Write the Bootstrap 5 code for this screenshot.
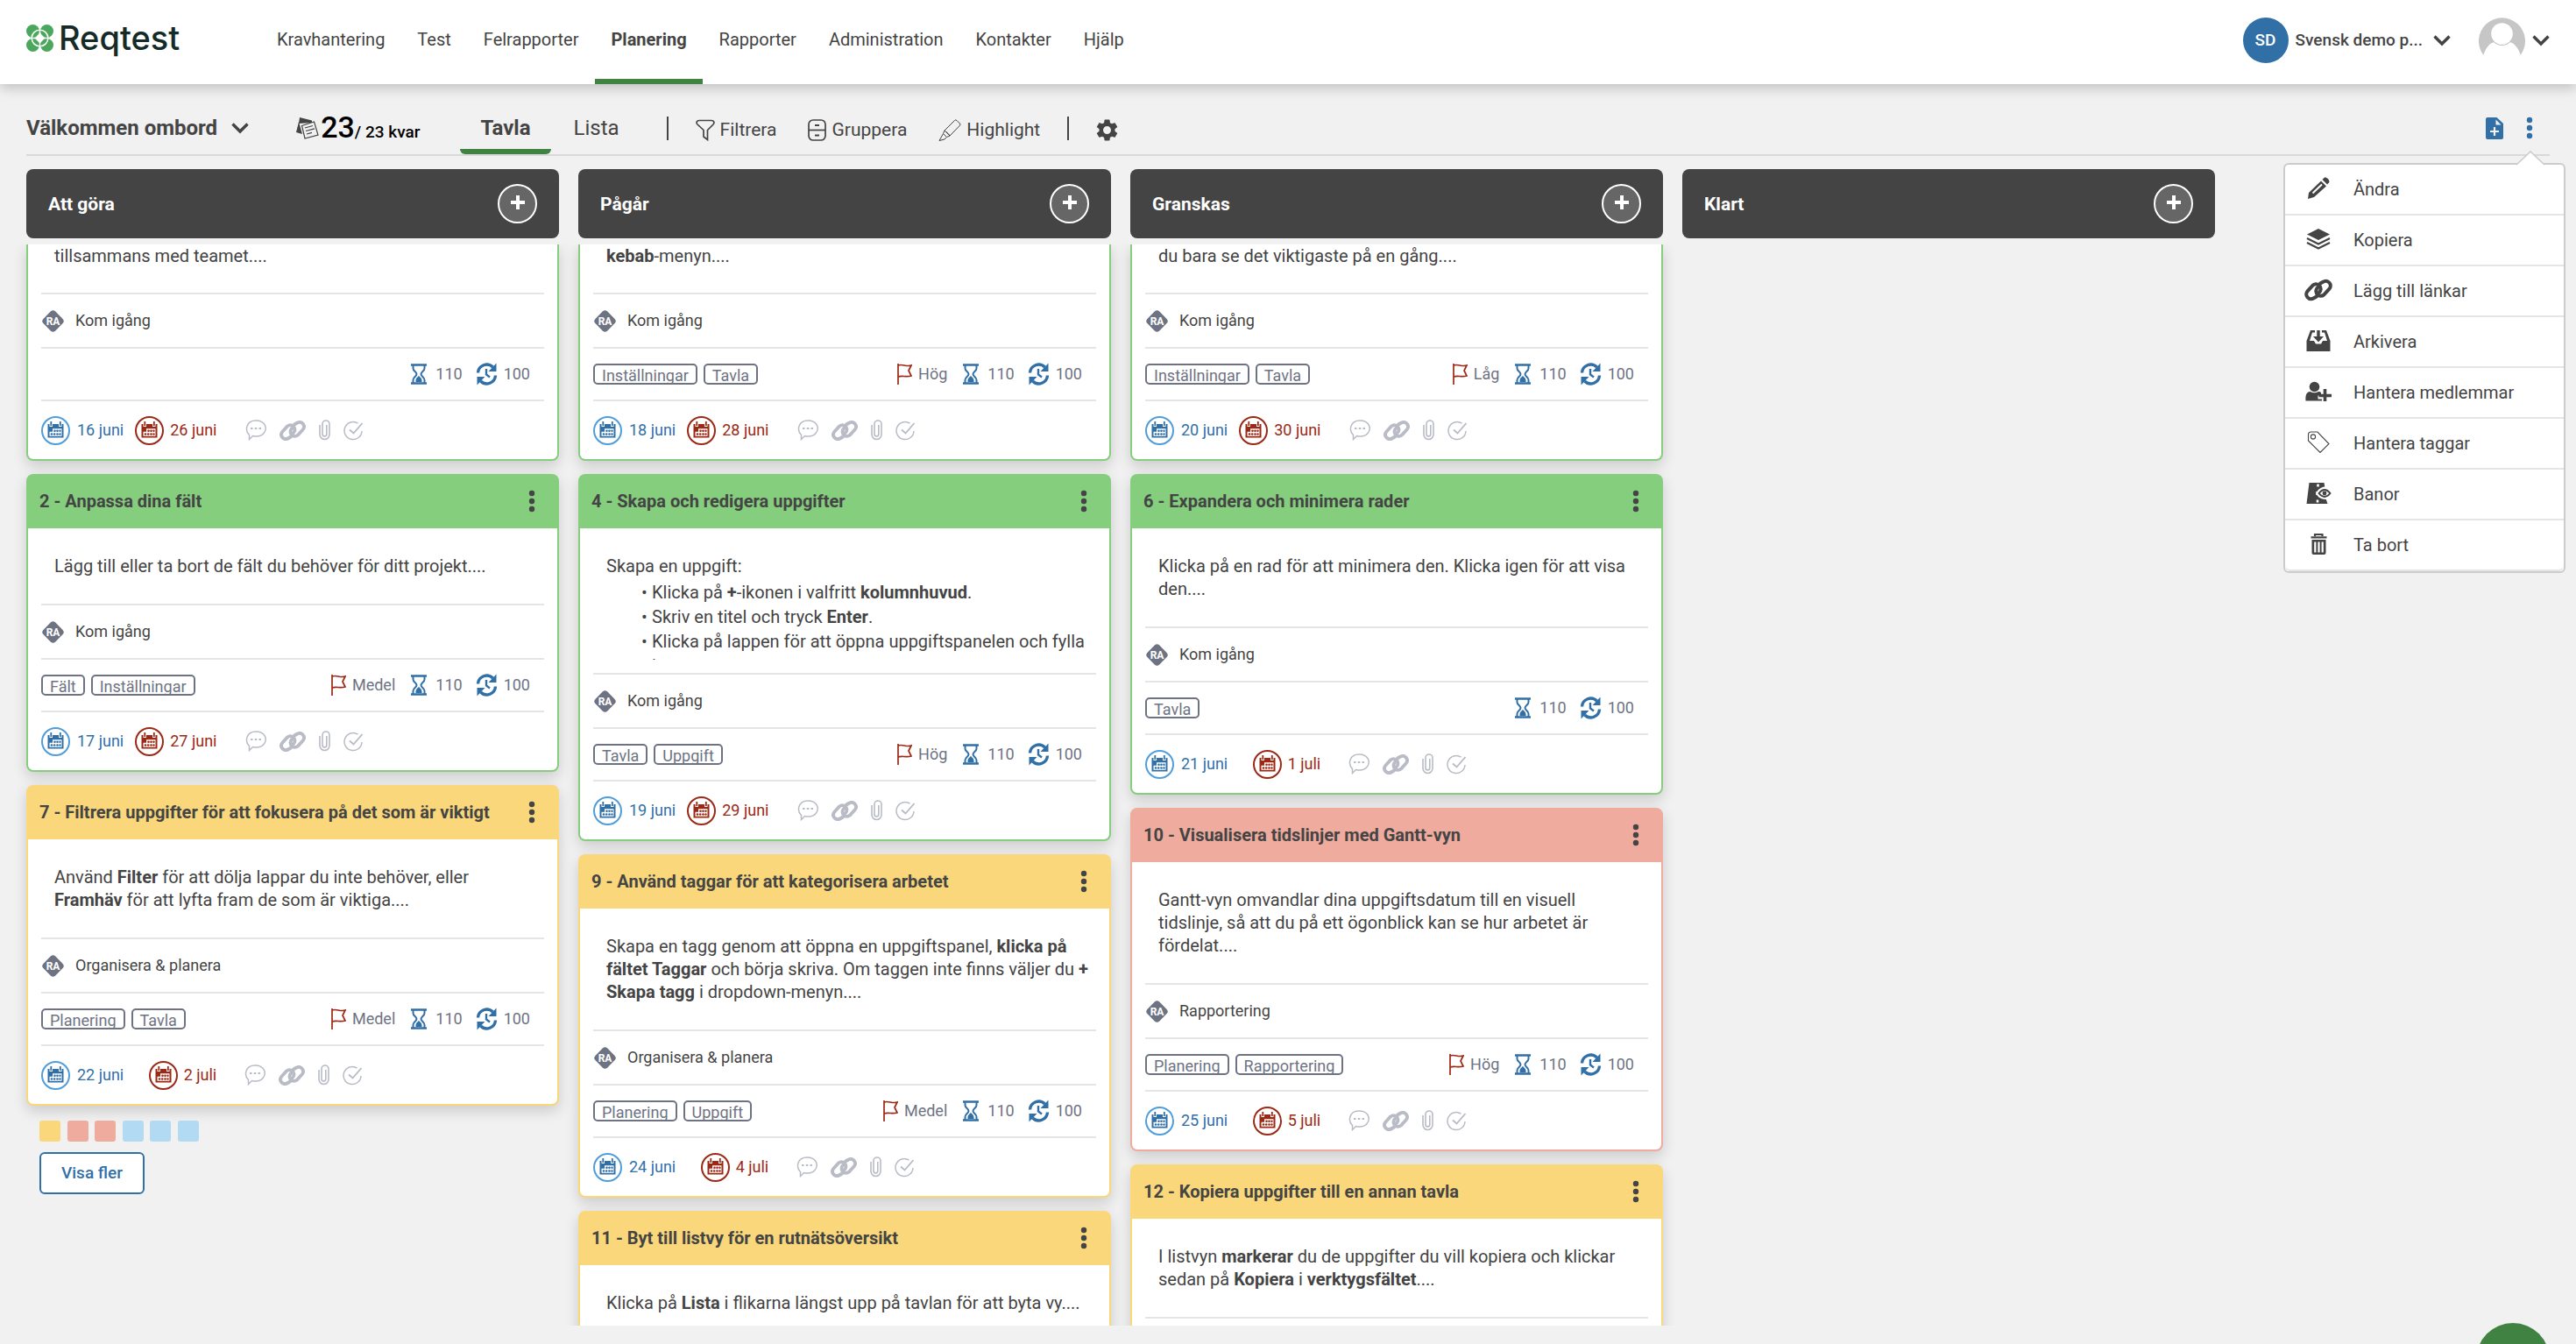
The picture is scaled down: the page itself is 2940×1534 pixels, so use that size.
<!DOCTYPE html>
<html lang="sv">
<head>
<meta charset="utf-8">
<meta name="viewport" content="width=device-width, initial-scale=1">
<title>Reqtest – Planering</title>
<link href="https://cdn.jsdelivr.net/npm/bootstrap@5.3.0/dist/css/bootstrap.min.css" rel="stylesheet">
<style>
  body { font: 400 20px/26px Roboto, "Liberation Sans", sans-serif; color: #444; background: #f1f1f1; height: 100vh; overflow: hidden; }
  svg { display: block; flex: none; }
  .btn { --bs-btn-font-size: inherit; --bs-btn-line-height: 26px; --bs-btn-color: #444; --bs-btn-border-width: 0; }
  .medium { font-weight: 500; }

  /* Top bar */
  .topbar { height: 96px; padding: 0 30px; background: #fff; box-shadow: 0 4px 14px rgba(0,0,0,.22); z-index: 2; }
  .brand { color: #152b28; font: 500 38px/46px Inter, Roboto, sans-serif; text-decoration: none; gap: 6px; width: 268px; margin-bottom: 10px; }
  .mainnav { gap: 1px; }
  .mainnav .nav-link { color: #444; padding: 32px 18px 38px; }
  .mainnav .nav-link.active { font-weight: 700; box-shadow: inset 0 -6px #3f8241; }
  .account { font-size: 19px; margin-bottom: 4px; }
  .initials { width: 52px; height: 52px; background: #3170a7; color: #fff; font-weight: 500; }

  /* Board toolbar */
  .toolbar { margin: 0 30px; height: 82px; padding-top: 20px; border-bottom: 2px solid #d9d9d9; }
  .board-name { font-size: 24px; font-weight: 700; gap: 16px; }
  .count { color: #000; font-size: 19px; font-weight: 500; gap: 2px; margin: 0 46px 0 54px; }
  .count-big { font-size: 34px; line-height: 34px; }
  .view-tabs { gap: 3px; }
  .view-tab { font-size: 24px; padding: 0 23px; border-radius: 0; }
  .view-tab.current { font-weight: 700; position: relative; }
  .view-tab.current::after { content: ""; position: absolute; left: 0; right: 0; bottom: 0; height: 6px; background: #3f8241; border-radius: 0 0 6px 6px; }
  .tools { gap: 36px; font-size: 21px; padding-top: 4px; }
  .tool { gap: 6px; }
  .divider-v { width: 2px; height: 27px; background: #444; margin: 0 31px; }
  .board-actions { gap: 26px; margin-right: 19px; }

  /* Lanes */
  .lanes { display: flex; gap: 22px; padding: 0 30px; }
  .lane { flex: 0 0 608px; }
  .lane-heads { margin-top: 15px; }
  .lane-head { height: 79px; background: #444; color: #fff; border-radius: 8px; padding: 0 25px; font-size: 21px; font-weight: 700; }
  .add-btn.btn { width: 45px; height: 45px; border: 2px solid #fff; background: #666; color: #fff; padding: 0 0 4px; }
  .lane-scroll { overflow: hidden; margin: 7px 0 21px; flex: 1 1 0; min-height: 0; }

  /* Tasks */
  .task { --tone: #85ce7e; border: 2px solid var(--tone); border-radius: 8px; background: #fff; box-shadow: 0 6px 16px rgba(0,0,0,.16); margin-bottom: 15px; }
  .task-yellow { --tone: #f9d77a; }
  .task-red { --tone: #efab9d; }
  .task-head { height: 60px; background: var(--tone); padding: 0 13px 2px; font-weight: 700; display: flex; align-items: center; justify-content: space-between; }
  .dots-btn.btn { padding: 0 12px; }
  .task-text { padding: 30px 22px 30px 30px; }
  .task-text.list-text { height: 165px; padding-bottom: 0; }
  .list-text > div { height: 120px; overflow: hidden; }
  .list-text ul { list-style: none; margin: 3px 0 0; padding-left: 52px; line-height: 28px; }
  .list-text li::before { content: "•"; margin-left: -12px; display: inline-block; width: 12px; }
  .task-cont { border-top: 0; border-radius: 0 0 8px 8px; }
  .task-cont .task-text { padding-top: 0; padding-bottom: 29px; }
  .task-row { margin: 0 15px; border-top: 2px solid #e5e5e5; display: flex; align-items: center; font-size: 18px; }
  .row-area { height: 62px; gap: 12px; }
  .row-tags { height: 60px; gap: 7px; padding-right: 16px; color: #6e7383; }
  .row-dates { height: 68px; }
  .tag-chip { height: 24px; border: 2px solid #6e7383; border-radius: 5px; color: #6e7383; line-height: 20px; padding: 2px 8px 0; overflow: hidden; text-decoration: none; }
  .metrics { display: flex; align-items: center; margin-left: auto; gap: 15px; }
  .metrics > span { display: flex; align-items: center; gap: 7px; }
  .metrics > .est { gap: 9px; margin-left: 2px; }
  .c-blue { color: #3170a7; --ring: #4f9ddb; }
  .c-red { color: #9b2915; }
  .date-start, .date-due { display: flex; align-items: center; }
  .date-start { margin-right: 13px; gap: 8px; }
  .date-due { min-width: 93px; justify-content: flex-end; gap: 7px; }
  .mini { display: flex; align-items: center; color: #b9bcc6; margin-left: 32px; gap: 15px; }
  .leftover { width: 182px; margin: 17px 15px 12px; }
  .leftover span { width: 24px; height: 24px; border-radius: 3px; }
  .sw-y { background: #f9d77a; } .sw-r { background: #efab9d; } .sw-b { background: #b2dbf3; }
  .more-btn.btn { margin-left: 15px; width: 120px; height: 48px; border: 2px solid #3170a7; border-radius: 6px; background: #fff; color: #3170a7; font-size: 19px; font-weight: 500; padding: 0; }

  /* Board menu */
  .board-menu.dropdown-menu { right: -18px; top: 90px; width: 322px; padding: 0; border: 2px solid #ccc; border-radius: 6px; font-size: 20px; color: #444; }
  .board-menu .dropdown-item { height: 58px; border-bottom: 2px solid #e5e5e5; padding: 0 0 0 22px; gap: 24px; color: #444; display: flex; align-items: center; }
  .board-menu .dropdown-item svg { margin-bottom: 3px; }
  .board-menu .arrow { position: absolute; top: -17px; right: 21px; }
  .help-dot.btn { position: fixed; right: 30px; bottom: -60px; width: 84px; height: 84px; background: #3f8241; }
</style>
</head>
<body class="d-flex flex-column">

<svg width="0" height="0" class="position-absolute" aria-hidden="true">
  <symbol id="i-chev" viewBox="0 0 20 14"><path d="M1.500 2.500 10 11l8.500-8.500" fill="none" stroke="currentColor" stroke-width="3.400"/></symbol>
  <symbol id="i-dots" viewBox="0 0 8 26"><g fill="currentColor"><circle cx="4" cy="4" r="3.200"/><circle cx="4" cy="13" r="3.200"/><circle cx="4" cy="22" r="3.200"/></g></symbol>
  <symbol id="i-plus" viewBox="0 0 16 16"><path d="M8 0v16M0 8h16" stroke="currentColor" stroke-width="4"/></symbol>
  <symbol id="i-flag" viewBox="0 0 17 24"><path d="M1 0v24M1 2c5-2 9 2 15 0l-3 6 3 6c-6 2-10-1-15 1" fill="none" stroke="currentColor" stroke-width="1.700"/></symbol>
  <symbol id="i-glass" viewBox="0 0 20 24"><path d="M1 1.500h18M1 22.500h18" stroke="currentColor" stroke-width="2.400"/><path d="M3.500 2v3.500c0 3 4 4 4 6.500s-4 3.500-4 6.500V22M16.500 2v3.500c0 3-4 4-4 6.500s4 3.500 4 6.500V22" fill="none" stroke="currentColor" stroke-width="2"/><path d="M10 13.500c-.5 2-3.500 2.500-3.500 6V21h7v-1.500c0-3.500-3-4-3.500-6z" fill="currentColor"/></symbol>
  <symbol id="i-cycle" viewBox="0 0 25 26"><path d="M2.500 11.500A10 10 0 0 1 19.500 5M22.500 14.500A10 10 0 0 1 5.500 21" fill="none" stroke="currentColor" stroke-width="3.400"/><path d="M23.500.5v9.500h-9zM1.500 25.500V16h9z" fill="currentColor"/><path d="M12 7v6.500l4 3" fill="none" stroke="currentColor" stroke-width="2.400"/></symbol>
  <symbol id="i-cal" viewBox="0 0 33 33"><circle cx="16.500" cy="16.500" r="15.500" fill="#fff" stroke="var(--ring, currentColor)" stroke-width="2"/><path d="M7.500 9h2v3h3.500V9h7v3h3.500V9h2v15.500h-18z" fill="currentColor"/><path d="M11.300 6v5M21.800 6v5" stroke="currentColor" stroke-width="1.800"/><path d="M13 14.300h10.500v8.500h-14v-5H13z" fill="#fff"/><g fill="currentColor"><circle cx="15.500" cy="16.700" r="1.300"/><circle cx="18.500" cy="16.700" r="1.300"/><circle cx="21.500" cy="16.700" r="1.200"/><circle cx="12" cy="20.500" r="1.300"/><circle cx="15.200" cy="20.500" r="1.300"/><circle cx="18.500" cy="20.500" r="1.300"/><circle cx="21.500" cy="20.500" r="1.200"/></g></symbol>
  <symbol id="i-bubble" viewBox="0 0 24 24"><path d="M4.500 17.500C-1 12 1 1 12 1s13.500 9 9 14.500c-3 3.600-8 4-12.500 3L4.500 22.500z" fill="none" stroke="currentColor" stroke-width="1.500"/><path d="M6 10h2.500M10.800 10h2.500M15.500 10H18" stroke="currentColor" stroke-width="2.200"/></symbol>
  <symbol id="i-link" viewBox="0 0 30 23"><g fill="none" stroke="currentColor" stroke-width="3.800" stroke-linecap="round"><path d="M13 18.500l-2.500 1.500c-6 3.500-11-3-7-7.500L9 6.500c4.500-3.500 10 1 8 6-.5 1.500-1.500 2-2.500 2.500"/><path d="M17 4.500L19.500 3c6-3.500 11 3 7 7.500L21 16.500c-4.500 3.500-10-1-8-6 .5-1.500 1.500-2 2.500-2.500"/></g></symbol>
  <symbol id="i-clip" viewBox="0 0 13 24"><path d="M1 6v11a5.500 5.500 0 0 0 11 0V5a4 4 0 0 0-8 0v11.500a2.400 2.400 0 0 0 4.800 0V6" fill="none" stroke="currentColor" stroke-width="1.600"/></symbol>
  <symbol id="i-check" viewBox="0 0 23 23"><path d="M16.500 3.200A10 10 0 1 0 21 12" fill="none" stroke="currentColor" stroke-width="1.500"/><path d="M7 10.500l4.500 4L21.500 3" fill="none" stroke="currentColor" stroke-width="1.900"/></symbol>
  <symbol id="i-ra" viewBox="0 0 27 27"><rect x="3.800" y="3.800" width="19.400" height="19.400" rx="4" transform="rotate(45 13.500 13.500)" fill="#6e7383"/><text x="13.500" y="17.500" text-anchor="middle" font-family="Roboto, sans-serif" font-size="12" font-weight="700" fill="#fff">RA</text></symbol>
</svg>

<header class="topbar d-flex align-items-center position-relative">
  <a href="#" class="brand d-flex align-items-center">
    <svg width="31" height="31" viewBox="0 0 31 31"><g fill="#4aa75c"><circle cx="7.500" cy="7.500" r="7.500"/><circle cx="23.500" cy="7.500" r="7.500"/><circle cx="7.500" cy="23.500" r="7.500"/><circle cx="23.500" cy="23.500" r="7.500"/></g><circle cx="15.500" cy="15.500" r="9.300" fill="none" stroke="#fff" stroke-width="1.600"/><circle cx="15.500" cy="15.500" r="4" fill="#fff"/></svg>
    <span>Reqtest</span>
  </a>
  <nav class="nav mainnav flex-nowrap flex-grow-1">
    <a class="nav-link" href="#">Kravhantering</a>
    <a class="nav-link" href="#">Test</a>
    <a class="nav-link" href="#">Felrapporter</a>
    <a class="nav-link active" href="#" aria-current="page">Planering</a>
    <a class="nav-link" href="#">Rapporter</a>
    <a class="nav-link" href="#">Administration</a>
    <a class="nav-link" href="#">Kontakter</a>
    <a class="nav-link" href="#">Hjälp</a>
  </nav>
  <div class="account d-flex align-items-center">
    <button type="button" class="btn p-0 d-flex align-items-center me-3">
      <span class="initials rounded-circle d-flex align-items-center justify-content-center me-2">SD</span>
      <span class="medium me-2 pe-1">Svensk demo p...</span>
      <svg width="20" height="14"><use href="#i-chev"/></svg>
    </button>
    <button type="button" class="btn p-0 ps-3 d-flex align-items-center gap-2" aria-label="Profil">
      <svg width="53" height="53" viewBox="0 0 53 53"><path d="M5.500 43A26.500 26.500 0 1 1 47.500 43C44.500 33 39 28.500 35 28L26.500 32 18 28C14 28.500 8.500 33 5.500 43z" fill="#c6c6c6"/><path d="M5.500 43C8 34 14 28 20 28h13c6 0 12 6 14.500 15-3 6-11 10-21 10s-18-4-21-10z" fill="#fff"/><circle cx="26.500" cy="18.500" r="13.500" fill="#c6c6c6"/><circle cx="26.500" cy="18.500" r="12.300" fill="#fff"/></svg>
      <svg width="20" height="14"><use href="#i-chev"/></svg>
    </button>
  </div>
</header>

<div class="toolbar d-flex align-items-center position-relative">
  <button type="button" class="btn board-name p-0 d-flex align-items-center">Välkommen ombord
    <svg width="20" height="14"><use href="#i-chev"/></svg></button>
  <div class="count d-flex align-items-center">
    <svg width="26" height="25" viewBox="0 0 26 25"><path d="M4 0l14 3.500V6L3 7zM3 5l4 14-7-2z" fill="#444"/><path d="M6.500 9.500L20.500 5l4.500 15-15 4z" fill="#f1f1f1" stroke="#444" stroke-width="1.200"/><path d="M10 12l9-2.500M11 15.500l10-2.700M12 19l6-1.700" stroke="#444" stroke-width="1.200"/></svg>
    <div><span class="count-big">23</span><span>/ 23 kvar</span></div>
  </div>
  <div class="view-tabs d-flex align-self-stretch">
    <button type="button" class="btn view-tab current">Tavla</button>
    <button type="button" class="btn view-tab">Lista</button>
  </div>
  <span class="divider-v"></span>
  <div class="tools d-flex align-items-center">
    <button type="button" class="btn tool p-0 d-flex align-items-center"><svg width="22" height="25" viewBox="0 0 22 25"><path d="M4 1.500h14c3 0 3.700 2.800 2 4.500L13.500 12.500v11L9 20v-7.500L2 6C.300 4.300 1 1.500 4 1.500z" fill="none" stroke="#444" stroke-width="1.700"/></svg>Filtrera</button>
    <button type="button" class="btn tool p-0 d-flex align-items-center"><svg width="21" height="25" viewBox="0 0 21 25"><rect x="1" y="1" width="19" height="23" rx="5" fill="none" stroke="#444" stroke-width="1.700"/><path d="M1 12.500h19" stroke="#444" stroke-width="1.700"/><path d="M8 7h5M8 18.500h5" stroke="#444" stroke-width="2"/></svg>Gruppera</button>
    <button type="button" class="btn tool p-0 d-flex align-items-center"><svg width="26" height="25" viewBox="0 0 26 25"><path d="M18.500 1.500q1.200-1.200 2.500 0l3.500 3.500q1 1 0 2.200L13 19l-6-6zM7 13l-1.500 3.500 4 4L13 19M5.500 16.500L1 24.500l6-1.500 2.500-2.500M8.500 14l4 4" fill="none" stroke="#444" stroke-width="1"/></svg>Highlight</button>
  </div>
  <span class="divider-v"></span>
  <button type="button" class="btn p-0 pt-1" aria-label="Inställningar"><svg width="25" height="25" viewBox="2 2 20 20"><path fill="#444" d="M19.140 12.940c.04-.3.060-.61.060-.94 0-.32-.02-.64-.07-.94l2.030-1.580c.18-.14.230-.41.120-.61l-1.920-3.320c-.12-.22-.37-.29-.59-.22l-2.390.96c-.5-.38-1.030-.7-1.620-.94l-.36-2.540c-.04-.24-.24-.41-.48-.41h-3.840c-.24 0-.43.170-.47.410l-.36 2.540c-.59.240-1.130.570-1.620.940l-2.390-.96c-.22-.08-.47 0-.59.220L2.740 8.870c-.12.210-.08.470.12.610l2.030 1.580c-.05.3-.09.630-.09.940s.02.640.07.940l-2.030 1.580c-.18.140-.23.410-.12.610l1.920 3.320c.12.220.37.290.59.220l2.390-.96c.5.380 1.030.7 1.620.940l.36 2.540c.05.240.24.410.48.410h3.840c.24 0 .44-.17.470-.41l.36-2.540c.59-.24 1.130-.56 1.620-.94l2.390.96c.22.080.47 0 .59-.22l1.920-3.320c.12-.22.070-.47-.12-.61l-2.010-1.580zM12 15.600c-1.980 0-3.600-1.620-3.600-3.600s1.620-3.600 3.600-3.600 3.600 1.620 3.600 3.600-1.620 3.600-3.600 3.600z"/></svg></button>

  <div class="board-actions d-flex align-items-center ms-auto">
    <button type="button" class="btn p-0" aria-label="Ny uppgift"><svg width="20" height="25" viewBox="0 0 20 25"><path d="M2 0h10.500L20 7v16a2 2 0 0 1-2 2H2a2 2 0 0 1-2-2V2a2 2 0 0 1 2-2z" fill="#3170a7"/><path d="M11.500 2.500v6h6z" fill="#f1f1f1"/><path d="M10 11v10M5 16h10" stroke="#f1f1f1" stroke-width="2.200"/></svg></button>
    <button type="button" class="btn p-0" aria-label="Fler val" aria-expanded="true"><svg class="c-blue" width="8" height="26"><use href="#i-dots"/></svg></button>
  </div>
  <div class="dropdown-menu board-menu show">
    <svg class="arrow" width="34" height="18" viewBox="0 0 34 18"><path d="M0 18L2 16 17 2 32 16l2 2z" fill="#fff"/><path d="M1 17L17 2l16 15" fill="none" stroke="#ccc" stroke-width="1.600"/></svg>
    <a class="dropdown-item rounded-top" href="#"><svg width="32" height="26" viewBox="0 0 32 26"><path d="M4 25l1-7L19 4.500l6 6L11 23z" fill="#444"/><path d="M20.500 3l2-2c2-2 7.500 3 5.500 5.500l-2 2z" fill="#444"/><path d="M9.500 18.500L20 8.500" stroke="#fff" stroke-width="2"/></svg>Ändra</a>
    <a class="dropdown-item" href="#"><svg width="32" height="26" viewBox="0 0 32 26"><path d="M16 1l13 6.500L16 14 3 7.500z" fill="#444"/><path d="M3 12l13 6.500L29 12M3 17l13 6.500L29 17" fill="none" stroke="#444" stroke-width="2.200"/></svg>Kopiera</a>
    <a class="dropdown-item" href="#"><svg width="32" height="26"><use href="#i-link"/></svg>Lägg till länkar</a>
    <a class="dropdown-item" href="#"><svg width="32" height="26" viewBox="0 0 32 26"><path d="M7 1h5v2.500H9L6 13h5l2 3.500h6L21 13h5L23 3.500h-3V1h5l4.500 12v12h-27V13z" fill="#444"/><path d="M14.300 1h3.400v7H22l-6 6.500L10 8h4.300z" fill="#444"/></svg>Arkivera</a>
    <a class="dropdown-item" href="#"><svg width="32" height="26" viewBox="0 0 32 26"><circle cx="11.500" cy="7.500" r="5.800" fill="#444"/><path d="M1.500 23.500c-.5-7 1-10 5-10.500q5 2.500 9.500 0c1.500 0 2.500.5 3 1v3.500h-3.500v4H20v2H3z" fill="#444"/><path d="M23.500 10v14M16.500 17.500h14.500" stroke="#444" stroke-width="3.600"/></svg>Hantera medlemmar</a>
    <a class="dropdown-item" href="#"><svg width="32" height="26" viewBox="0 0 32 26"><path d="M4.500 4q0-3 3-3h7.500L28 14.500 18 24.500 4.500 11z" fill="none" stroke="#444" stroke-width="1.100"/><circle cx="10" cy="6.500" r="2.600" fill="none" stroke="#444" stroke-width="1.100"/></svg>Hantera taggar</a>
    <a class="dropdown-item" href="#"><svg width="32" height="26" viewBox="0 0 32 26"><path d="M5.500 1h17l.8 4.500c-5 .5-9 4-9.500 7.500.5 4 5 7 11 7l1.700 5H2.500z" fill="#444"/><path d="M15.500 2.500v3M14.500 11v4M15 20.500v3" stroke="#fff" stroke-width="2.600"/><path d="M16.500 13q6.500-8 13 0-6.500 8-13 0z" fill="#fff" stroke="#444" stroke-width="1.900"/><circle cx="23" cy="13" r="2.400" fill="#444"/></svg>Banor</a>
    <a class="dropdown-item rounded-bottom" href="#"><svg width="32" height="26" viewBox="0 0 32 26"><path d="M12 4V2h8.500v2M7.500 5.300h18" fill="none" stroke="#444" stroke-width="2.200"/><path d="M8.500 8h16v15q0 2-2 2h-12q-2 0-2-2z" fill="#444"/><path d="M12.300 10.500v12M16.500 10.500v12M20.700 10.500v12" stroke="#fff" stroke-width="2.200"/></svg>Ta bort</a>
  </div>
</div>

<div class="lanes lane-heads">
  <div class="lane lane-head d-flex align-items-center justify-content-between">Att göra<button type="button" class="btn add-btn rounded-circle d-flex align-items-center justify-content-center" aria-label="Lägg till"><svg width="16" height="16"><use href="#i-plus"/></svg></button></div>
  <div class="lane lane-head d-flex align-items-center justify-content-between">Pågår<button type="button" class="btn add-btn rounded-circle d-flex align-items-center justify-content-center" aria-label="Lägg till"><svg width="16" height="16"><use href="#i-plus"/></svg></button></div>
  <div class="lane lane-head d-flex align-items-center justify-content-between">Granskas<button type="button" class="btn add-btn rounded-circle d-flex align-items-center justify-content-center" aria-label="Lägg till"><svg width="16" height="16"><use href="#i-plus"/></svg></button></div>
  <div class="lane lane-head d-flex align-items-center justify-content-between">Klart<button type="button" class="btn add-btn rounded-circle d-flex align-items-center justify-content-center" aria-label="Lägg till"><svg width="16" height="16"><use href="#i-plus"/></svg></button></div>
</div>

<main class="lanes lane-scroll">
  <section class="lane">
    <article class="task task-cont">
      <div class="task-text">tillsammans med teamet....</div>
      <div class="task-row row-area"><svg width="27" height="27"><use href="#i-ra"/></svg>Kom igång</div>
      <div class="task-row row-tags">
        <div class="metrics"><span class="est"><svg class="c-blue" width="20" height="24"><use href="#i-glass"/></svg>110</span><span><svg class="c-blue" width="25" height="26"><use href="#i-cycle"/></svg>100</span></div>
      </div>
      <div class="task-row row-dates"><span class="date-start c-blue"><svg width="33" height="33"><use href="#i-cal"/></svg>16 juni</span><span class="date-due c-red"><svg width="33" height="33"><use href="#i-cal"/></svg>26 juni</span>
        <span class="mini"><svg width="24" height="24"><use href="#i-bubble"/></svg><svg width="30" height="23"><use href="#i-link"/></svg><svg width="13" height="24"><use href="#i-clip"/></svg><svg width="23" height="23"><use href="#i-check"/></svg></span></div>
    </article>

    <article class="task">
      <div class="task-head">2 - Anpassa dina fält<button type="button" class="btn dots-btn" aria-label="Meny"><svg width="8" height="26"><use href="#i-dots"/></svg></button></div>
      <div class="task-text">Lägg till eller ta bort de fält du behöver för ditt projekt....</div>
      <div class="task-row row-area"><svg width="27" height="27"><use href="#i-ra"/></svg>Kom igång</div>
      <div class="task-row row-tags"><a class="tag-chip" href="#">Fält</a><a class="tag-chip" href="#">Inställningar</a>
        <div class="metrics"><span><svg class="c-red" width="17" height="24"><use href="#i-flag"/></svg>Medel</span><span class="est"><svg class="c-blue" width="20" height="24"><use href="#i-glass"/></svg>110</span><span><svg class="c-blue" width="25" height="26"><use href="#i-cycle"/></svg>100</span></div>
      </div>
      <div class="task-row row-dates"><span class="date-start c-blue"><svg width="33" height="33"><use href="#i-cal"/></svg>17 juni</span><span class="date-due c-red"><svg width="33" height="33"><use href="#i-cal"/></svg>27 juni</span>
        <span class="mini"><svg width="24" height="24"><use href="#i-bubble"/></svg><svg width="30" height="23"><use href="#i-link"/></svg><svg width="13" height="24"><use href="#i-clip"/></svg><svg width="23" height="23"><use href="#i-check"/></svg></span></div>
    </article>

    <article class="task task-yellow">
      <div class="task-head">7 - Filtrera uppgifter för att fokusera på det som är viktigt<button type="button" class="btn dots-btn" aria-label="Meny"><svg width="8" height="26"><use href="#i-dots"/></svg></button></div>
      <div class="task-text">Använd <b>Filter</b> för att dölja lappar du inte behöver, eller <b>Framhäv</b> för att lyfta fram de som är viktiga....</div>
      <div class="task-row row-area"><svg width="27" height="27"><use href="#i-ra"/></svg>Organisera &amp; planera</div>
      <div class="task-row row-tags"><a class="tag-chip" href="#">Planering</a><a class="tag-chip" href="#">Tavla</a>
        <div class="metrics"><span><svg class="c-red" width="17" height="24"><use href="#i-flag"/></svg>Medel</span><span class="est"><svg class="c-blue" width="20" height="24"><use href="#i-glass"/></svg>110</span><span><svg class="c-blue" width="25" height="26"><use href="#i-cycle"/></svg>100</span></div>
      </div>
      <div class="task-row row-dates"><span class="date-start c-blue"><svg width="33" height="33"><use href="#i-cal"/></svg>22 juni</span><span class="date-due c-red"><svg width="33" height="33"><use href="#i-cal"/></svg>2 juli</span>
        <span class="mini"><svg width="24" height="24"><use href="#i-bubble"/></svg><svg width="30" height="23"><use href="#i-link"/></svg><svg width="13" height="24"><use href="#i-clip"/></svg><svg width="23" height="23"><use href="#i-check"/></svg></span></div>
    </article>

    <div class="leftover d-flex justify-content-between"><span class="sw-y"></span><span class="sw-r"></span><span class="sw-r"></span><span class="sw-b"></span><span class="sw-b"></span><span class="sw-b"></span></div>
    <button type="button" class="btn more-btn">Visa fler</button>
  </section>

  <section class="lane">
    <article class="task task-cont">
      <div class="task-text"><b>kebab</b>-menyn....</div>
      <div class="task-row row-area"><svg width="27" height="27"><use href="#i-ra"/></svg>Kom igång</div>
      <div class="task-row row-tags"><a class="tag-chip" href="#">Inställningar</a><a class="tag-chip" href="#">Tavla</a>
        <div class="metrics"><span><svg class="c-red" width="17" height="24"><use href="#i-flag"/></svg>Hög</span><span class="est"><svg class="c-blue" width="20" height="24"><use href="#i-glass"/></svg>110</span><span><svg class="c-blue" width="25" height="26"><use href="#i-cycle"/></svg>100</span></div>
      </div>
      <div class="task-row row-dates"><span class="date-start c-blue"><svg width="33" height="33"><use href="#i-cal"/></svg>18 juni</span><span class="date-due c-red"><svg width="33" height="33"><use href="#i-cal"/></svg>28 juni</span>
        <span class="mini"><svg width="24" height="24"><use href="#i-bubble"/></svg><svg width="30" height="23"><use href="#i-link"/></svg><svg width="13" height="24"><use href="#i-clip"/></svg><svg width="23" height="23"><use href="#i-check"/></svg></span></div>
    </article>

    <article class="task">
      <div class="task-head">4 - Skapa och redigera uppgifter<button type="button" class="btn dots-btn" aria-label="Meny"><svg width="8" height="26"><use href="#i-dots"/></svg></button></div>
      <div class="task-text list-text"><div>Skapa en uppgift:
        <ul><li>Klicka på <b>+</b>-ikonen i valfritt <b>kolumnhuvud</b>.</li><li>Skriv en titel och tryck <b>Enter</b>.</li><li>Klicka på lappen för att öppna uppgiftspanelen och fylla i</li></ul></div></div>
      <div class="task-row row-area"><svg width="27" height="27"><use href="#i-ra"/></svg>Kom igång</div>
      <div class="task-row row-tags"><a class="tag-chip" href="#">Tavla</a><a class="tag-chip" href="#">Uppgift</a>
        <div class="metrics"><span><svg class="c-red" width="17" height="24"><use href="#i-flag"/></svg>Hög</span><span class="est"><svg class="c-blue" width="20" height="24"><use href="#i-glass"/></svg>110</span><span><svg class="c-blue" width="25" height="26"><use href="#i-cycle"/></svg>100</span></div>
      </div>
      <div class="task-row row-dates"><span class="date-start c-blue"><svg width="33" height="33"><use href="#i-cal"/></svg>19 juni</span><span class="date-due c-red"><svg width="33" height="33"><use href="#i-cal"/></svg>29 juni</span>
        <span class="mini"><svg width="24" height="24"><use href="#i-bubble"/></svg><svg width="30" height="23"><use href="#i-link"/></svg><svg width="13" height="24"><use href="#i-clip"/></svg><svg width="23" height="23"><use href="#i-check"/></svg></span></div>
    </article>

    <article class="task task-yellow">
      <div class="task-head">9 - Använd taggar för att kategorisera arbetet<button type="button" class="btn dots-btn" aria-label="Meny"><svg width="8" height="26"><use href="#i-dots"/></svg></button></div>
      <div class="task-text">Skapa en tagg genom att öppna en uppgiftspanel, <b>klicka på fältet Taggar</b> och börja skriva. Om taggen inte finns väljer du <b>+ Skapa tagg</b> i dropdown-menyn....</div>
      <div class="task-row row-area"><svg width="27" height="27"><use href="#i-ra"/></svg>Organisera &amp; planera</div>
      <div class="task-row row-tags"><a class="tag-chip" href="#">Planering</a><a class="tag-chip" href="#">Uppgift</a>
        <div class="metrics"><span><svg class="c-red" width="17" height="24"><use href="#i-flag"/></svg>Medel</span><span class="est"><svg class="c-blue" width="20" height="24"><use href="#i-glass"/></svg>110</span><span><svg class="c-blue" width="25" height="26"><use href="#i-cycle"/></svg>100</span></div>
      </div>
      <div class="task-row row-dates"><span class="date-start c-blue"><svg width="33" height="33"><use href="#i-cal"/></svg>24 juni</span><span class="date-due c-red"><svg width="33" height="33"><use href="#i-cal"/></svg>4 juli</span>
        <span class="mini"><svg width="24" height="24"><use href="#i-bubble"/></svg><svg width="30" height="23"><use href="#i-link"/></svg><svg width="13" height="24"><use href="#i-clip"/></svg><svg width="23" height="23"><use href="#i-check"/></svg></span></div>
    </article>

    <article class="task task-yellow">
      <div class="task-head">11 - Byt till listvy för en rutnätsöversikt<button type="button" class="btn dots-btn" aria-label="Meny"><svg width="8" height="26"><use href="#i-dots"/></svg></button></div>
      <div class="task-text">Klicka på <b>Lista</b> i flikarna längst upp på tavlan för att byta vy....</div>
      <div class="task-row row-area"></div>
    </article>
  </section>

  <section class="lane">
    <article class="task task-cont">
      <div class="task-text">du bara se det viktigaste på en gång....</div>
      <div class="task-row row-area"><svg width="27" height="27"><use href="#i-ra"/></svg>Kom igång</div>
      <div class="task-row row-tags"><a class="tag-chip" href="#">Inställningar</a><a class="tag-chip" href="#">Tavla</a>
        <div class="metrics"><span><svg class="c-red" width="17" height="24"><use href="#i-flag"/></svg>Låg</span><span class="est"><svg class="c-blue" width="20" height="24"><use href="#i-glass"/></svg>110</span><span><svg class="c-blue" width="25" height="26"><use href="#i-cycle"/></svg>100</span></div>
      </div>
      <div class="task-row row-dates"><span class="date-start c-blue"><svg width="33" height="33"><use href="#i-cal"/></svg>20 juni</span><span class="date-due c-red"><svg width="33" height="33"><use href="#i-cal"/></svg>30 juni</span>
        <span class="mini"><svg width="24" height="24"><use href="#i-bubble"/></svg><svg width="30" height="23"><use href="#i-link"/></svg><svg width="13" height="24"><use href="#i-clip"/></svg><svg width="23" height="23"><use href="#i-check"/></svg></span></div>
    </article>

    <article class="task">
      <div class="task-head">6 - Expandera och minimera rader<button type="button" class="btn dots-btn" aria-label="Meny"><svg width="8" height="26"><use href="#i-dots"/></svg></button></div>
      <div class="task-text">Klicka på en rad för att minimera den. Klicka igen för att visa den....</div>
      <div class="task-row row-area"><svg width="27" height="27"><use href="#i-ra"/></svg>Kom igång</div>
      <div class="task-row row-tags"><a class="tag-chip" href="#">Tavla</a>
        <div class="metrics"><span class="est"><svg class="c-blue" width="20" height="24"><use href="#i-glass"/></svg>110</span><span><svg class="c-blue" width="25" height="26"><use href="#i-cycle"/></svg>100</span></div>
      </div>
      <div class="task-row row-dates"><span class="date-start c-blue"><svg width="33" height="33"><use href="#i-cal"/></svg>21 juni</span><span class="date-due c-red"><svg width="33" height="33"><use href="#i-cal"/></svg>1 juli</span>
        <span class="mini"><svg width="24" height="24"><use href="#i-bubble"/></svg><svg width="30" height="23"><use href="#i-link"/></svg><svg width="13" height="24"><use href="#i-clip"/></svg><svg width="23" height="23"><use href="#i-check"/></svg></span></div>
    </article>

    <article class="task task-red">
      <div class="task-head">10 - Visualisera tidslinjer med Gantt-vyn<button type="button" class="btn dots-btn" aria-label="Meny"><svg width="8" height="26"><use href="#i-dots"/></svg></button></div>
      <div class="task-text">Gantt-vyn omvandlar dina uppgiftsdatum till en visuell tidslinje, så att du på ett ögonblick kan se hur arbetet är fördelat....</div>
      <div class="task-row row-area"><svg width="27" height="27"><use href="#i-ra"/></svg>Rapportering</div>
      <div class="task-row row-tags"><a class="tag-chip" href="#">Planering</a><a class="tag-chip" href="#">Rapportering</a>
        <div class="metrics"><span><svg class="c-red" width="17" height="24"><use href="#i-flag"/></svg>Hög</span><span class="est"><svg class="c-blue" width="20" height="24"><use href="#i-glass"/></svg>110</span><span><svg class="c-blue" width="25" height="26"><use href="#i-cycle"/></svg>100</span></div>
      </div>
      <div class="task-row row-dates"><span class="date-start c-blue"><svg width="33" height="33"><use href="#i-cal"/></svg>25 juni</span><span class="date-due c-red"><svg width="33" height="33"><use href="#i-cal"/></svg>5 juli</span>
        <span class="mini"><svg width="24" height="24"><use href="#i-bubble"/></svg><svg width="30" height="23"><use href="#i-link"/></svg><svg width="13" height="24"><use href="#i-clip"/></svg><svg width="23" height="23"><use href="#i-check"/></svg></span></div>
    </article>

    <article class="task task-yellow">
      <div class="task-head">12 - Kopiera uppgifter till en annan tavla<button type="button" class="btn dots-btn" aria-label="Meny"><svg width="8" height="26"><use href="#i-dots"/></svg></button></div>
      <div class="task-text">I listvyn <b>markerar</b> du de uppgifter du vill kopiera och klickar sedan på <b>Kopiera</b> i <b>verktygsfältet</b>....</div>
      <div class="task-row row-area"></div>
    </article>
  </section>
</main>

<button type="button" class="btn help-dot rounded-circle" aria-label="Hjälp"></button>

<script src="https://cdn.jsdelivr.net/npm/bootstrap@5.3.0/dist/js/bootstrap.bundle.min.js"></script>
</body>
</html>
